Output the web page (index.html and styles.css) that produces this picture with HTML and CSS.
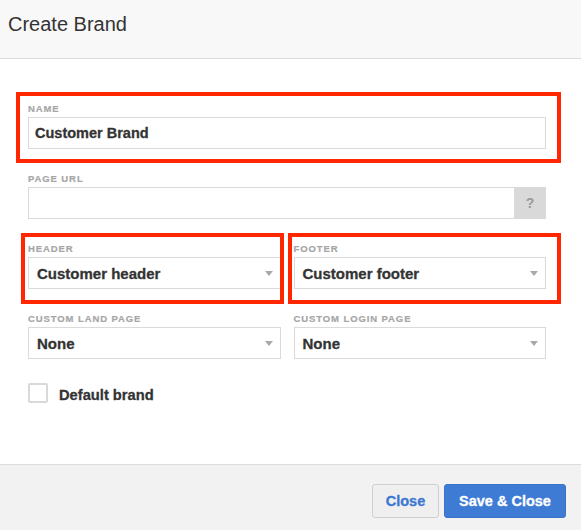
FILE: index.html
```html
<!DOCTYPE html>
<html lang="en">
<head>
<meta charset="utf-8">
<title>Create Brand</title>
<link rel="stylesheet" href="styles.css">
</head>
<body>
<div class="modal">
  <div class="modal-header">
    <h1 class="modal-title">Create Brand</h1>
  </div>
  <div class="modal-body">
    <div class="field annot annot-name">
      <div class="label">Name</div>
      <div class="control text-input">Customer Brand</div>
    </div>
    <div class="field">
      <div class="label">Page URL</div>
      <div class="input-group">
        <div class="control group-input"></div>
        <div class="addon">?</div>
      </div>
    </div>
    <div class="row">
      <div class="field annot annot-header">
        <div class="label">Header</div>
        <div class="control select"><span>Customer header</span><svg class="caret" width="8" height="5" viewBox="0 0 8 5"><path d="M0 0H8L4 5Z" fill="#a9a9a9"/></svg></div>
      </div>
      <div class="field annot annot-footer">
        <div class="label">Footer</div>
        <div class="control select"><span>Customer footer</span><svg class="caret" width="8" height="5" viewBox="0 0 8 5"><path d="M0 0H8L4 5Z" fill="#a9a9a9"/></svg></div>
      </div>
    </div>
    <div class="row">
      <div class="field">
        <div class="label">Custom land page</div>
        <div class="control select"><span>None</span><svg class="caret" width="8" height="5" viewBox="0 0 8 5"><path d="M0 0H8L4 5Z" fill="#a9a9a9"/></svg></div>
      </div>
      <div class="field">
        <div class="label">Custom login page</div>
        <div class="control select"><span>None</span><svg class="caret" width="8" height="5" viewBox="0 0 8 5"><path d="M0 0H8L4 5Z" fill="#a9a9a9"/></svg></div>
      </div>
    </div>
    <div class="check-row">
      <span class="checkbox"></span>
      <span class="check-label">Default brand</span>
    </div>
  </div>
  <div class="modal-footer">
    <button class="btn btn-default">Close</button>
    <button class="btn btn-primary">Save &amp; Close</button>
  </div>
</div>
</body>
</html>
```
FILE: styles.css
```css
* { box-sizing: border-box; }
html, body { margin: 0; padding: 0; background: #fff; }
body {
  font-family: "Liberation Sans", Arial, Helvetica, sans-serif;
  color: #333;
}
.modal { width: 581px; height: 530px; display: flex; flex-direction: column; overflow: hidden; }

.modal-header {
  height: 59px;
  background: #f8f8f8;
  border-bottom: 1px solid #dcdcdc;
  padding: 13px 8px 0;
}
.modal-title {
  margin: 0;
  font-size: 20px;
  line-height: 23px;
  font-weight: normal;
  color: #333;
}

.modal-body {
  padding: 44px 35px 61px 28px;
  background: #fff;
}

.field { margin-bottom: 24px; }
.label {
  font-size: 9.5px;
  line-height: 12px;
  height: 12px;
  margin-bottom: 2px;
  font-weight: bold;
  text-transform: uppercase;
  letter-spacing: 0.9px;
  color: #a6a6a6;
  -webkit-text-stroke: 0.2px #a6a6a6;
}
.control {
  height: 32px;
  border: 1px solid #dadada;
  background: #fff;
  font-weight: bold;
  color: #333;
  display: flex;
  align-items: center;
  -webkit-text-stroke: 0.3px #333;
}
.text-input { padding-left: 6px; font-size: 14.5px; }

.input-group { display: flex; height: 32px; }
.group-input { flex: 1; border-right: none; }
.addon {
  width: 32px;
  height: 32px;
  background: #d9d9d9;
  color: #9a9a9a;
  font-weight: bold;
  font-size: 14px;
  display: flex;
  align-items: center;
  justify-content: center;
}

.row { display: grid; grid-template-columns: 1fr 1fr; column-gap: 13px; }
.select { padding: 0 7px 0 8px; justify-content: space-between; font-size: 15px; }
.caret { flex: none; }

.annot { position: relative; }
.annot::after {
  content: "";
  position: absolute;
  border: 4px solid #ff2600;
  pointer-events: none;
}
.annot-name::after { top: -11px; bottom: -14px; left: -12px; right: -15px; }
.annot-header::after { top: -10px; bottom: -15px; left: -7px; right: -3px; }
.annot-footer::after { top: -10px; bottom: -15px; left: -6px; right: -15px; }

.check-row { display: flex; align-items: center; height: 20px; }
.checkbox {
  width: 20px; height: 20px;
  border: 2px solid #d9d9d9;
  border-radius: 2px;
  background: #fff;
}
.check-label {
  margin-left: 11px;
  padding-top: 4px;
  font-size: 14.7px;
  font-weight: bold;
  color: #333;
  -webkit-text-stroke: 0.3px #333;
}

.modal-footer {
  flex: 1;
  background: #f2f2f2;
  border-top: 1px solid #dcdcdc;
  padding: 19px 15px 0 0;
  display: flex;
  justify-content: flex-end;
  align-items: flex-start;
  gap: 5px;
}
.btn {
  height: 34px;
  border-radius: 3px;
  font-family: "Liberation Sans", Arial, Helvetica, sans-serif;
  font-weight: bold;
  font-size: 14.5px;
  padding: 0;
  cursor: pointer;
}
.btn-default {
  width: 67px;
  background: #efefef;
  border: 1px solid #cfcfcf;
  color: #3b78d2;
  -webkit-text-stroke: 0.3px #3b78d2;
}
.btn-primary {
  width: 122px;
  background: #3d7bd5;
  border: 1px solid #3a74c9;
  color: #fff;
  -webkit-text-stroke: 0.3px #fff;
}
```
